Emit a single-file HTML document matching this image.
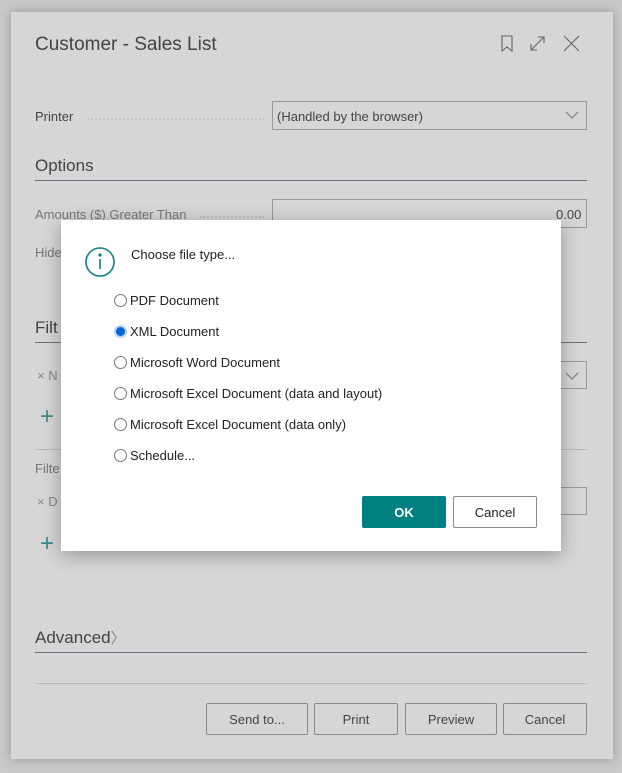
<!DOCTYPE html>
<html><head><style>
*{box-sizing:border-box;margin:0;padding:0}
body{width:622px;height:773px;background:#c9c9c9;font-family:"Liberation Sans",sans-serif;position:relative;overflow:hidden;color:#333}
.a{position:absolute}
.panel{left:11px;top:12px;width:602px;height:747px;background:#d6d6d6;box-shadow:0 0 10px rgba(0,0,0,.25)}
.t{font-size:13px;color:#444}
.dots{border-bottom:2px dotted #c4c4c4}
.box{border:1px solid #999;}
.btn{border:1px solid #8a8a8a;font-size:13px;color:#444;display:flex;align-items:center;justify-content:center;border-radius:2px}
.modal{left:61px;top:220px;width:500px;height:331px;background:#fff;box-shadow:0 4px 18px rgba(0,0,0,.3)}
.r{width:13px;height:13px;border:1px solid #777;border-radius:50%;position:absolute;left:53px}
.lab{position:absolute;left:69px;font-size:13px;color:#222}
</style></head><body>
<div class="a panel"></div>
<div class="a" style="left:35px;top:34px;font-size:19px;color:#444">Customer - Sales List</div>
<svg class="a" style="left:498px;top:34px" width="84" height="20" fill="none" stroke="#666" stroke-width="1.1"><path d="M4 2h10v15l-5-4-5 4z"/><path d="M33 16l13-13M40 3h6v6M33 10v6h6"/><path d="M66 2l15 15M81 2L66 17"/></svg>
<div class="a t" style="left:35px;top:109px">Printer</div>
<div class="a dots" style="left:88px;top:118px;width:176px"></div>
<div class="a box" style="left:272px;top:101px;width:315px;height:29px"></div>
<div class="a t" style="left:277px;top:109px">(Handled by the browser)</div>
<svg class="a" style="left:565px;top:110px" width="14" height="10" fill="none" stroke="#777"><path d="M1 2l6 6 6-6"/></svg>
<div class="a" style="left:35px;top:156px;font-size:17px;color:#444">Options</div>
<div class="a" style="left:35px;top:180px;width:552px;height:1px;background:#6b7180"></div>
<div class="a t" style="left:35px;top:207px;color:#777">Amounts ($) Greater Than</div>
<div class="a dots" style="left:200px;top:216px;width:64px"></div>
<div class="a box" style="left:272px;top:199px;width:315px;height:29px"></div>
<div class="a t" style="left:556px;top:207px">0.00</div>
<div class="a t" style="left:35px;top:245px;color:#777">Hide</div>
<div class="a" style="left:35px;top:318px;font-size:17px;color:#444">Filt</div>
<div class="a" style="left:35px;top:342px;width:552px;height:1px;background:#6b7180"></div>
<div class="a t" style="left:37px;top:368px;color:#888">× N</div>
<div class="a box" style="left:555px;top:361px;width:32px;height:28px"></div>
<svg class="a" style="left:565px;top:371px" width="14" height="10" fill="none" stroke="#777"><path d="M1 2l6 6 6-6"/></svg>
<div class="a" style="left:40px;top:403px;font-size:24px;color:#3c8c8c;font-weight:300">+</div>
<div class="a" style="left:35px;top:449px;width:552px;height:1px;background:#bbb"></div>
<div class="a t" style="left:35px;top:461px;color:#777">Filte</div>
<div class="a t" style="left:37px;top:494px;color:#888">× D</div>
<div class="a box" style="left:555px;top:487px;width:32px;height:28px;border-left:none"></div>
<div class="a" style="left:40px;top:530px;font-size:24px;color:#3c8c8c;font-weight:300">+</div>
<div class="a" style="left:35px;top:627px;font-size:17px;color:#444">Advanced<span style="color:#888;font-size:15px">〉</span></div>
<div class="a" style="left:35px;top:652px;width:552px;height:1px;background:#6b7180"></div>
<div class="a" style="left:35px;top:683px;width:552px;height:1px;background:#bbb"></div>
<div class="a btn" style="left:206px;top:703px;width:102px;height:32px">Send to...</div>
<div class="a btn" style="left:314px;top:703px;width:84px;height:32px">Print</div>
<div class="a btn" style="left:405px;top:703px;width:92px;height:32px">Preview</div>
<div class="a btn" style="left:503px;top:703px;width:84px;height:32px">Cancel</div>
<div class="a modal">
<svg class="a" style="left:23px;top:26px" width="32" height="32" fill="none" stroke="#108080" stroke-width="1.6"><circle cx="16" cy="16" r="14"/><path d="M16 13v10"/><circle cx="16" cy="9" r=".8" fill="#108080"/></svg>
<div class="a" style="left:70px;top:27px;font-size:13px;color:#222">Choose file type...</div>
<div class="r" style="top:74px"></div><div class="lab" style="top:73px">PDF Document</div>
<div class="r" style="top:105px;border:2px solid #b9d3f3;background:#0a64d6"></div><div class="lab" style="top:104px">XML Document</div>
<div class="r" style="top:136px"></div><div class="lab" style="top:135px">Microsoft Word Document</div>
<div class="r" style="top:167px"></div><div class="lab" style="top:166px">Microsoft Excel Document (data and layout)</div>
<div class="r" style="top:198px"></div><div class="lab" style="top:197px">Microsoft Excel Document (data only)</div>
<div class="r" style="top:229px"></div><div class="lab" style="top:228px">Schedule...</div>
<div class="a btn" style="left:301px;top:276px;width:84px;height:32px;background:#008080;border-color:#008080;color:#fff;font-weight:bold">OK</div>
<div class="a btn" style="left:392px;top:276px;width:84px;height:32px;color:#222">Cancel</div>
</div>
</body></html>
